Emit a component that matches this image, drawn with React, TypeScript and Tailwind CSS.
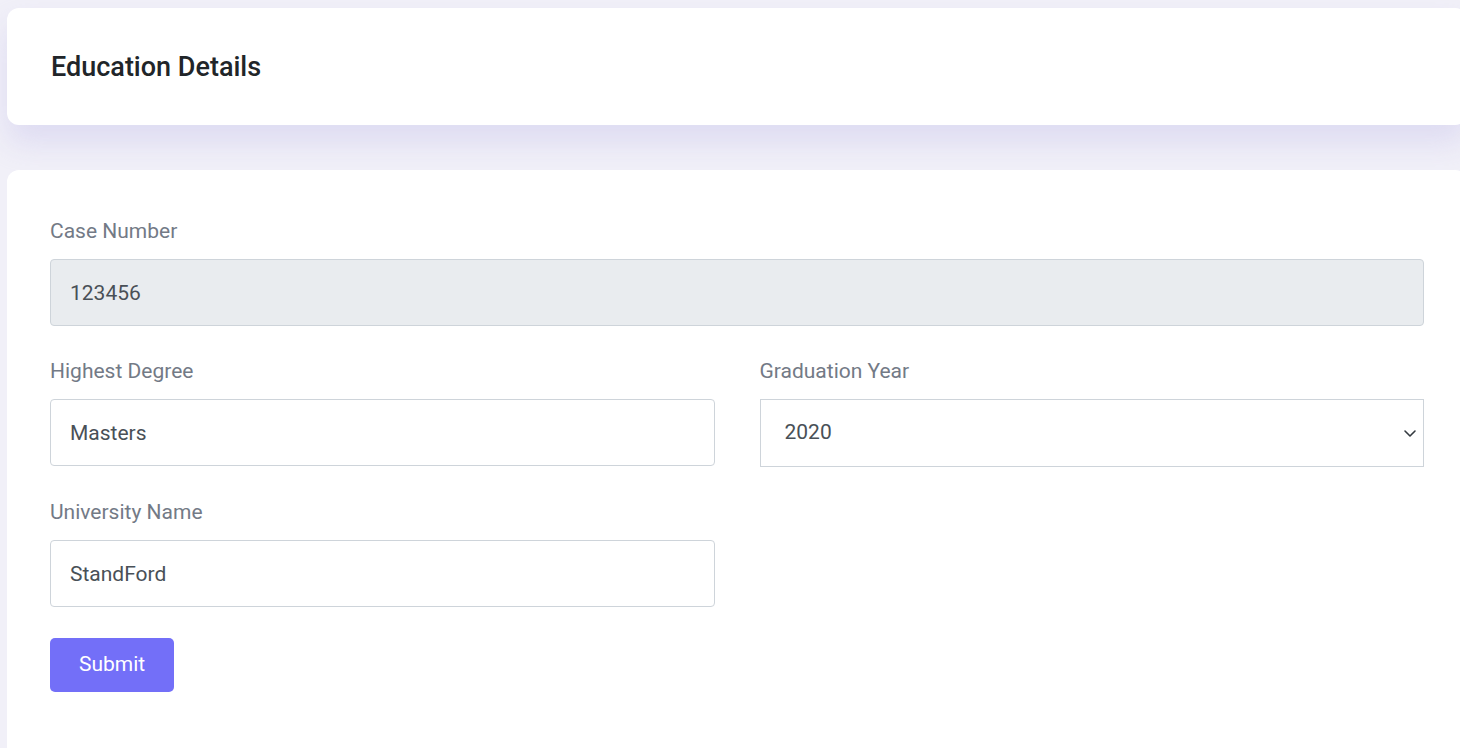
import { useState } from 'react';

const years = ['2016', '2017', '2018', '2019', '2020', '2021', '2022', '2023'];

function Field({ label, children }: { label: string; children: React.ReactNode }) {
  return (
    <div className="mb-[32px]">
      <label className="block text-[21px] leading-[27px] text-[#737a86] mb-[14px]">{label}</label>
      {children}
    </div>
  );
}

export default function App() {
  const [degree, setDegree] = useState('Masters');
  const [year, setYear] = useState('2020');
  const [university, setUniversity] = useState('StandFord');

  const inputCls =
    'block w-full h-[67px] px-[19px] text-[21px] text-[#495057] border border-[#ced4da] rounded-[4px] outline-none';

  return (
    <div
      className="min-h-screen w-full overflow-hidden bg-[#f1f0f8] pt-[8px] pl-[7px]"
      style={{ fontFamily: 'Roboto, "Noto Sans", sans-serif' }}
    >
      {/* header */}
      <div className="w-[1460px] h-[117px] bg-white rounded-[12px] shadow-[0_18px_30px_rgba(200,196,235,0.45)] flex items-center px-[44px]">
        <h1 className="text-[27px] font-medium text-[#212529] pt-[1px]">Education Details</h1>
      </div>

      {/* form */}
      <div className="mt-[45px] w-[1460px] min-h-[600px] bg-white rounded-[12px] pt-[48px] px-[43px]">
        <Field label="Case Number">
          <input className={`${inputCls} bg-[#e9ecef]`} value="123456" readOnly />
        </Field>

        <div className="grid grid-cols-2 gap-x-[45px]">
          <Field label="Highest Degree">
            <input
              className={`${inputCls} bg-white`}
              value={degree}
              onChange={(e) => setDegree(e.target.value)}
            />
          </Field>
          <Field label="Graduation Year">
            <div className="relative">
              <select
                className="block w-full h-[68px] pl-[24px] text-[21px] text-[#495057] bg-white border border-[#ced4da] rounded-none appearance-none outline-none"
                value={year}
                onChange={(e) => setYear(e.target.value)}
              >
                {years.map((y) => (
                  <option key={y}>{y}</option>
                ))}
              </select>
              <svg
                className="absolute right-[6px] top-1/2 -translate-y-1/2 pointer-events-none"
                width="16"
                height="16"
                viewBox="0 0 16 16"
                fill="none"
                stroke="#343a40"
                strokeWidth="1.6"
                strokeLinecap="round"
                strokeLinejoin="round"
              >
                <path d="M3 6l5 5 5-5" />
              </svg>
            </div>
          </Field>
          <Field label="University Name">
            <input
              className={`${inputCls} bg-white`}
              value={university}
              onChange={(e) => setUniversity(e.target.value)}
            />
          </Field>
        </div>

        <button className="-mt-[1px] h-[54px] px-[29px] bg-[#736ff8] text-white text-[21px] rounded-[5px]">
          Submit
        </button>
      </div>
    </div>
  );
}
